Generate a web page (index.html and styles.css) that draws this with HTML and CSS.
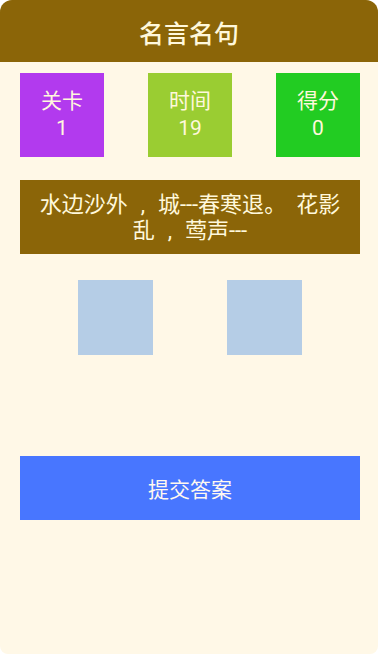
FILE: index.html
```html
<!DOCTYPE html>
<html lang="zh">
<head>
<meta charset="utf-8">
<title>名言名句</title>
<link rel="stylesheet" href="styles.css">
</head>
<body>
<div class="app">
  <header class="title-bar">名言名句</header>
  <section class="stats">
    <div class="stat stat-level"><span>关卡</span><span>1</span></div>
    <div class="stat stat-time"><span>时间</span><span>19</span></div>
    <div class="stat stat-score"><span>得分</span><span>0</span></div>
  </section>
  <section class="quote">
    <span class="line">水边沙外<span class="p-comma">,</span>城---春寒退<span class="p-stop">。</span>花影</span>
    <span class="line">乱<span class="p-comma">,</span>莺声---</span>
  </section>
  <section class="slots">
    <div class="slot"></div>
    <div class="slot"></div>
  </section>
  <button class="submit">提交答案</button>
</div>
</body>
</html>
```

FILE: styles.css
```css
html, body {
  margin: 0;
  padding: 0;
  background: #ffffff;
}
body {
  font-family: Roboto, "Noto Sans CJK SC", sans-serif;
}
.app {
  width: 378px;
  height: 654px;
  background: #fff8e7;
  border-radius: 12px 12px 8px 8px;
  overflow: hidden;
  display: flex;
  flex-direction: column;
}
.title-bar {
  height: 62px;
  background: #8b6508;
  color: #fff8dc;
  font-size: 25px;
  font-weight: 500;
  display: flex;
  align-items: center;
  justify-content: center;
  padding-top: 2px;
  box-sizing: border-box;
}
.stats {
  margin-top: 11px;
  padding: 0 18px 0 20px;
  display: flex;
  justify-content: space-between;
}
.stat {
  width: 84px;
  height: 84px;
  display: flex;
  flex-direction: column;
  align-items: center;
  justify-content: center;
  color: #fff8dc;
  font-size: 21px;
  line-height: 27px;
}
.stat-level { background: #b23aee; }
.stat-time { background: #9acd32; }
.stat-score { background: #22cc22; }
.quote {
  margin: 23px 18px 0 20px;
  height: 74px;
  box-sizing: border-box;
  padding-top: 12px;
  background: #8b6508;
  color: #fff8dc;
  font-size: 22px;
  line-height: 26px;
  display: flex;
  flex-direction: column;
  align-items: center;
}
.line {
  white-space: nowrap;
}
.p-comma {
  display: inline-block;
  width: 30px;
  text-align: center;
}
.p-stop {
  display: inline-block;
  width: 32px;
  text-align: left;
}
.slots {
  margin-top: 26px;
  padding-left: 2px;
  display: flex;
  justify-content: center;
  gap: 74px;
}
.slot {
  width: 75px;
  height: 75px;
  background: #b5cde6;
}
.submit {
  margin: 101px 18px 0 20px;
  height: 64px;
  border: 0;
  background: #4876ff;
  color: #fff8f0;
  font-family: Roboto, "Noto Sans CJK SC", sans-serif;
  font-size: 21px;
}
```
